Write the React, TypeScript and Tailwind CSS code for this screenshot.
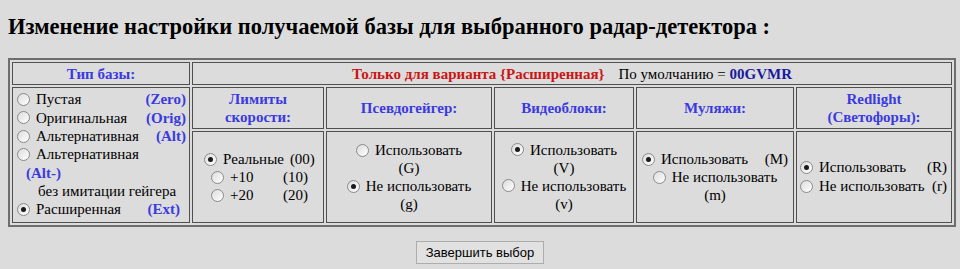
import React from "react";

const Radio = ({ checked = false }: { checked?: boolean }) => (
  <span className="inline-flex items-center justify-center w-[13px] h-[13px] rounded-full border border-[#8a8a8a] bg-gradient-to-br from-[#dcdcdc] to-white mr-[6px] shrink-0 align-[-2px]">
    {checked && <span className="w-[5px] h-[5px] rounded-full bg-[#1a1a1a]" />}
  </span>
);

const B = ({ children }: { children: React.ReactNode }) => (
  <b className="text-[#3a3ae0]">{children}</b>
);

const td = "border border-[#505050] align-middle";

export default function App() {
  return (
    <div className="min-h-[269px] bg-[#dcdcdc] text-black px-[8px] pt-[14px] font-[family-name:'Liberation_Serif','Times_New_Roman',serif] text-[15px] leading-[18px]">
      <h1 className="text-[22.5px] leading-[26px] font-bold m-0">
        Изменение настройки получаемой базы для выбранного радар-детектора :
      </h1>
      <table className="mt-[18px] w-[944px] table-fixed border-separate border-spacing-[2px] border-2 border-[#6e6e6e]">
        <colgroup>
          <col className="w-[178px]" />
          <col className="w-[132px]" />
          <col className="w-[166px]" />
          <col className="w-[140px]" />
          <col className="w-[158px]" />
          <col className="w-[156px]" />
        </colgroup>
        <tbody>
          <tr className="h-[23px]">
            <td className={`${td} text-center`}>
              <B>Тип базы:</B>
            </td>
            <td colSpan={5} className={`${td} text-center`}>
              <b className="text-[#cc1414]">Только для варианта {"{"}Расширенная{"}"}</b>
              <span className="ml-[14px]">По умолчанию = </span>
              <b className="text-[#1a1aa0]">00GVMR</b>
            </td>
          </tr>
          <tr className="h-[42px]">
            <td rowSpan={2} className={`${td} pl-[4px] pr-[3px] leading-[18.3px] pb-[1px]`}>
              <div className="flex justify-between items-center">
                <span className="flex items-center"><Radio />Пустая</span>
                <B>(Zero)</B>
              </div>
              <div className="flex justify-between items-center">
                <span className="flex items-center"><Radio />Оригинальная</span>
                <B>(Orig)</B>
              </div>
              <div className="flex justify-between items-center">
                <span className="flex items-center"><Radio />Альтернативная</span>
                <B>(Alt)</B>
              </div>
              <div className="flex items-center">
                <Radio />Альтернативная
              </div>
              <div className="pl-[9px]">
                <B>(Alt-)</B>
              </div>
              <div className="pl-[21px]">без имитации гейгера</div>
              <div className="flex justify-between items-center pr-[6px]">
                <span className="flex items-center"><Radio checked />Расширенная</span>
                <B>(Ext)</B>
              </div>
            </td>
            <td className={`${td} text-center`}>
              <B>Лимиты<br />скорости:</B>
            </td>
            <td className={`${td} text-center`}>
              <B>Псевдогейгер:</B>
            </td>
            <td className={`${td} text-center`}>
              <B>Видеоблоки:</B>
            </td>
            <td className={`${td} text-center`}>
              <B>Муляжи:</B>
            </td>
            <td className={`${td} text-center`}>
              <B>Redlight<br />(Светофоры):</B>
            </td>
          </tr>
          <tr className="h-[92px]">
            <td className={`${td}`}>
              <div className="flex flex-col">
                <div className="flex items-center pl-[11px]">
                  <Radio checked />Реальные<span className="ml-[6px]">(00)</span>
                </div>
                <div className="flex items-center pl-[18px]">
                  <Radio /><span className="w-[53px]">+10</span>(10)
                </div>
                <div className="flex items-center pl-[18px]">
                  <Radio /><span className="w-[53px]">+20</span>(20)
                </div>
              </div>
            </td>
            <td className={`${td} text-center`}>
              <div className="flex items-center justify-center"><Radio />Использовать</div>
              <div>(G)</div>
              <div className="flex items-center justify-center"><Radio checked />Не использовать</div>
              <div>(g)</div>
            </td>
            <td className={`${td} text-center pb-[1px]`}>
              <div className="flex items-center justify-center"><Radio checked />Использовать</div>
              <div>(V)</div>
              <div className="flex items-center justify-center"><Radio />Не использовать</div>
              <div>(v)</div>
            </td>
            <td className={`${td} text-center px-[5px]`}>
              <div className="flex items-center justify-between">
                <span className="flex items-center"><Radio checked />Использовать</span>
                <span>(M)</span>
              </div>
              <div className="flex items-center justify-center"><Radio />Не использовать</div>
              <div>(m)</div>
            </td>
            <td className={`${td} pl-[3px] pr-[4px] leading-[19px]`}>
              <div className="flex items-center justify-between">
                <span className="flex items-center"><Radio checked />Использовать</span>
                <span>(R)</span>
              </div>
              <div className="flex items-center justify-between">
                <span className="flex items-center"><Radio />Не использовать</span>
                <span>(r)</span>
              </div>
            </td>
          </tr>
        </tbody>
      </table>
      <div className="flex justify-center mt-[14px]">
        <button className="h-[23px] px-[9px] border border-[#adadad] bg-[#e1e1e1] text-[13px] leading-[19px] text-black font-[family-name:'Liberation_Sans',Arial,sans-serif]">
          Завершить выбор
        </button>
      </div>
    </div>
  );
}
